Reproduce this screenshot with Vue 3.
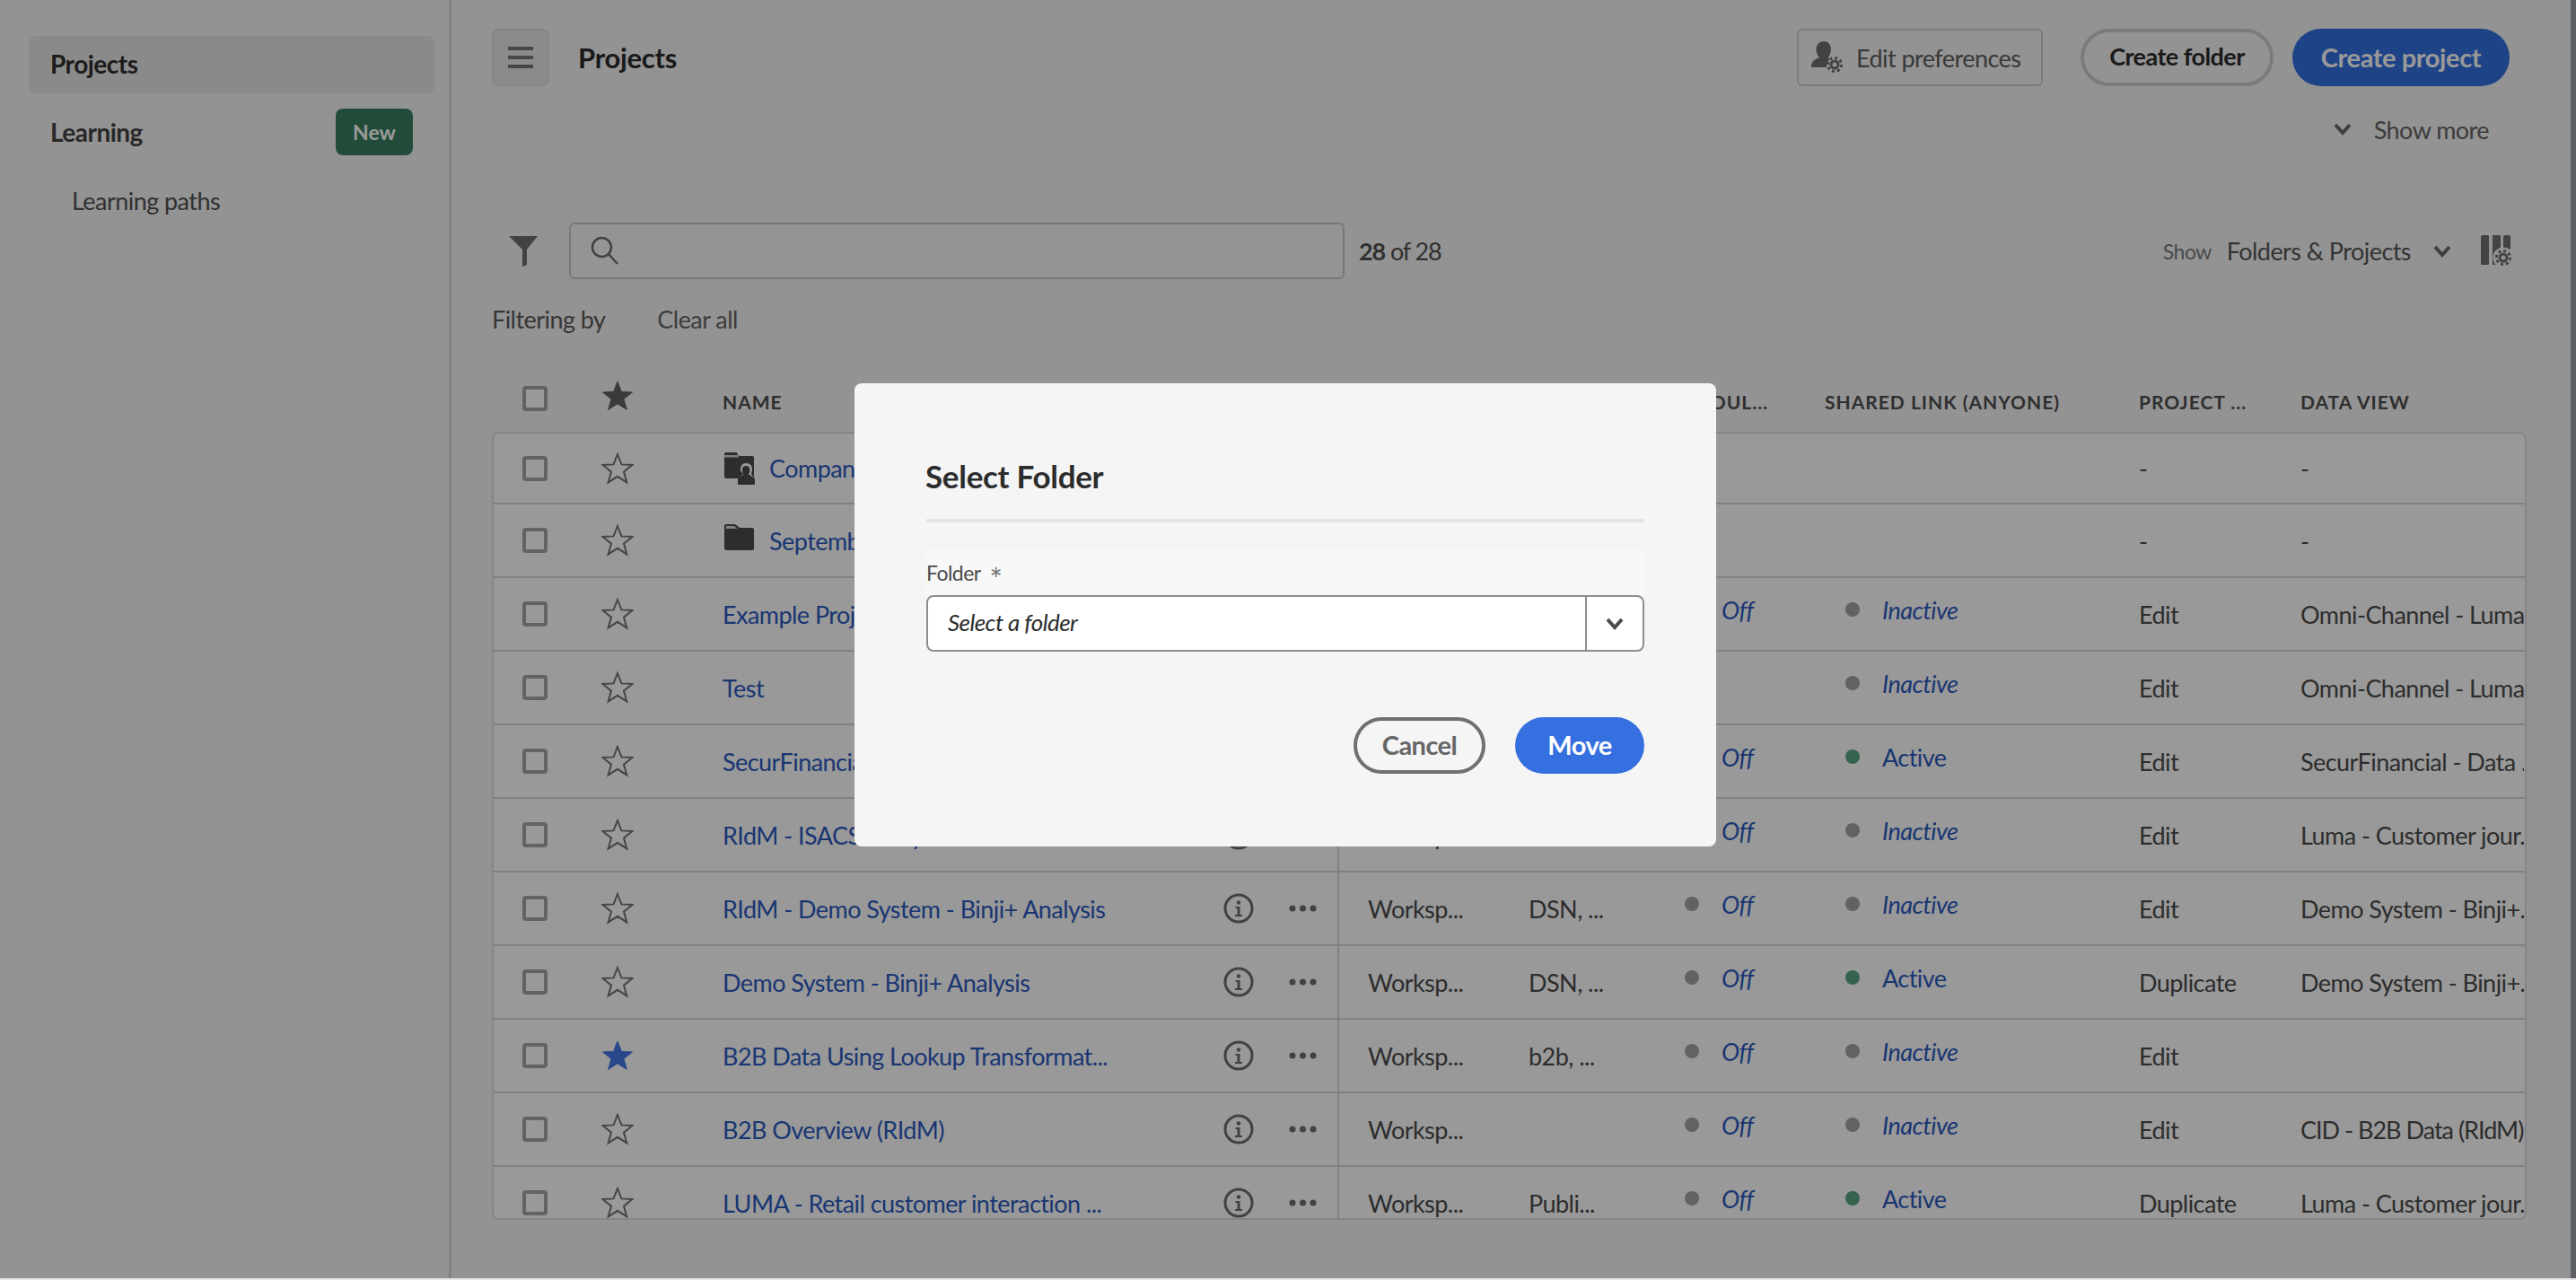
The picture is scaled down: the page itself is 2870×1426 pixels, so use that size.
<script setup>
const rows = [
  { name: 'Company Folder', folder: 'user', project: '-', view: '-' },
  { name: 'September Projects', folder: 'plain', project: '-', view: '-' },
  { name: 'Example Project', type: 'Worksp...', tags: '', off: true, link: 'Inactive', project: 'Edit', view: 'Omni-Channel - Luma...' },
  { name: 'Test', type: 'Worksp...', tags: '', off: false, link: 'Inactive', project: 'Edit', view: 'Omni-Channel - Luma...' },
  { name: 'SecurFinancial - Data Analysis', type: 'Worksp...', tags: '', off: true, link: 'Active', project: 'Edit', view: 'SecurFinancial - Data ...' },
  { name: 'RIdM - ISACS Analysis', type: 'Worksp...', tags: '', off: true, link: 'Inactive', project: 'Edit', view: 'Luma - Customer jour...' },
  { name: 'RIdM - Demo System - Binji+ Analysis', type: 'Worksp...', tags: 'DSN, ...', off: true, link: 'Inactive', project: 'Edit', view: 'Demo System - Binji+...' },
  { name: 'Demo System - Binji+ Analysis', type: 'Worksp...', tags: 'DSN, ...', off: true, link: 'Active', project: 'Duplicate', view: 'Demo System - Binji+...' },
  { name: 'B2B Data Using Lookup Transformat...', starred: true, type: 'Worksp...', tags: 'b2b, ...', off: true, link: 'Inactive', project: 'Edit', view: '' },
  { name: 'B2B Overview (RIdM)', type: 'Worksp...', tags: '', off: true, link: 'Inactive', project: 'Edit', view: 'CID - B2B Data (RIdM)', tight: true },
  { name: 'LUMA - Retail customer interaction ...', type: 'Worksp...', tags: 'Publi...', off: true, link: 'Active', project: 'Duplicate', view: 'Luma - Customer jour...' },
]
const starPoints = '18,2 22.4,13.4 34.5,14 25,21.6 28.3,33.4 18,26.8 7.7,33.4 11,21.6 1.5,14 13.6,13.4'
</script>

<template>
  <div class="app">
    <aside class="sidebar">
      <div class="nav-item selected">Projects</div>
      <div class="nav-item learning"><span>Learning</span><span class="badge">New</span></div>
      <div class="nav-sub">Learning paths</div>
    </aside>

    <main class="main">
      <div class="topbar">
        <button class="menu-btn" aria-label="Menu"><i></i><i></i><i></i></button>
        <h1 class="page-title">Projects</h1>
        <div class="spacer"></div>
        <button class="pref-btn">
          <svg class="pref-icon" viewBox="0 0 36 36">
            <path d="M14 0c5 0 8 4 8 9 0 4-2 7-3 9l1 2.500a11 11 0 0 0-3 8.500H0c0-6 2-8 9-11-2-2-3.500-5-3.500-9C5.500 4 9 0 14 0z" fill="currentColor" />
            <circle cx="26" cy="26" r="4" fill="none" stroke="currentColor" stroke-width="3" />
            <circle cx="26" cy="26" r="7.600" fill="none" stroke="currentColor" stroke-width="3" stroke-dasharray="3 2.970" />
          </svg>
          Edit preferences
        </button>
        <button class="outline-btn">Create folder</button>
        <button class="primary-btn">Create project</button>
      </div>

      <div class="show-more">
        <svg class="chev" viewBox="0 0 20 14"><polyline points="2,2 10,11 18,2" /></svg>
        <span>Show more</span>
      </div>

      <div class="filter-row">
        <svg class="funnel" viewBox="0 0 32 34"><path d="M0 0h32L20 15v17l-5 2V15z" /></svg>
        <div class="search">
          <svg class="search-icon" viewBox="0 0 32 32">
            <circle cx="12.500" cy="12.500" r="10.500" />
            <line x1="20" y1="20" x2="30" y2="31" />
          </svg>
        </div>
        <div class="count"><b>28</b> of 28</div>
        <div class="spacer"></div>
        <span class="show-label">Show</span>
        <span class="show-value">Folders &amp; Projects</span>
        <svg class="chev show-chev" viewBox="0 0 20 14"><polyline points="2,2 10,11 18,2" /></svg>
        <svg class="cols-icon" viewBox="0 0 36 36">
          <rect x="0" y="0" width="9" height="33" rx="1.500" />
          <rect x="13" y="0" width="9" height="33" />
          <rect x="25" y="0" width="8" height="16" rx="1.500" />
          <circle cx="25" cy="25" r="11.500" class="cols-hole" />
          <circle cx="25" cy="25" r="4" fill="none" class="cols-gear" stroke-width="3" />
          <circle cx="25" cy="25" r="7.600" fill="none" class="cols-gear" stroke-width="3" stroke-dasharray="3 2.970" />
        </svg>
      </div>

      <div class="filtering">
        <span>Filtering by</span>
        <span class="clear-all">Clear all</span>
      </div>

      <div class="thead">
        <div class="c-check"><span class="checkbox"></span></div>
        <div class="c-star">
          <svg class="star" viewBox="0 0 36 36"><polygon :points="starPoints" class="star-head" /></svg>
        </div>
        <div>NAME</div>
        <div></div>
        <div></div>
        <div></div>
        <div>SCHEDUL...</div>
        <div>SHARED LINK (ANYONE)</div>
        <div>PROJECT ...</div>
        <div>DATA VIEW</div>
      </div>

      <div class="table">
        <div v-for="row in rows" :key="row.name" class="tr">
          <div class="c-check"><span class="checkbox"></span></div>
          <div class="c-star">
            <svg class="star" viewBox="0 0 36 36">
              <polygon :points="starPoints" :class="row.starred ? 'star-on' : 'star-off'" />
            </svg>
          </div>
          <div class="c-name">
            <svg v-if="row.folder" class="folder" viewBox="0 0 34 36">
              <path d="M2 0h9c1 0 2 .500 3 1.500L17 4h14c1.500 0 2 .800 2 2v21c0 1-.800 2-2 2H2c-1 0-2-1-2-2V2C0 .800 1 0 2 0z" />
              <path v-if="row.folder === 'plain'" class="folder-tab" d="M2 2h9l3.500 3H2z" />
              <template v-if="row.folder === 'user'">
                <path d="M2 0h12v3H0V2C0 1 1 0 2 0z" />
                <path class="folder-tab" d="M0 3h16v2.500H0z" />
                <path class="folder-cut" d="M24 12c5 0 7 3 7 7 0 3-1 4-1 5l4 6v6H14v-6l7-6c0-1-3-2-3-5 0-4 2-7 6-7z" />
                <path d="M24 15c3 0 4.500 2 4.500 4.500 0 2.500-1 4-1.500 5 3 2 7 3 7 6V36H15v-5.500c0-3 4-4 6.500-6-.500-1-1.500-2.500-1.500-5C20 17 21 15 24 15z" />
              </template>
            </svg>
            <span class="link">{{ row.name }}</span>
          </div>
          <div class="c-actions">
            <template v-if="!row.folder">
              <svg class="info" viewBox="0 0 34 34">
                <circle cx="17" cy="17" r="15" />
                <circle cx="17" cy="10.500" r="2.200" class="solid" />
                <path d="M13.500 15h5v9h2.500v2h-8v-2h2.500v-7h-2z" class="solid" />
              </svg>
              <svg class="dots" viewBox="0 0 31 8">
                <circle cx="4" cy="4" r="3.500" /><circle cx="15.500" cy="4" r="3.500" /><circle cx="27" cy="4" r="3.500" />
              </svg>
            </template>
          </div>
          <div class="c-type">{{ row.type }}</div>
          <div class="c-tags">{{ row.tags }}</div>
          <div class="c-status">
            <template v-if="row.off">
              <span class="dot"></span><span class="status-text italic">Off</span>
            </template>
          </div>
          <div class="c-status">
            <template v-if="row.link">
              <span class="dot" :class="{ green: row.link === 'Active' }"></span>
              <span class="status-text" :class="{ italic: row.link === 'Inactive' }">{{ row.link }}</span>
            </template>
          </div>
          <div>{{ row.project }}</div>
          <div class="c-view" :class="{ tight: row.tight }">{{ row.view }}</div>
        </div>
      </div>
    </main>

    <div class="edge"></div>

    <div class="overlay"></div>

    <section class="dialog">
      <h2 class="dialog-title">Select Folder</h2>
      <div class="rule"></div>
      <div class="field-label"><span>Folder</span><span class="req">*</span></div>
      <div class="select">
        <span class="select-value">Select a folder</span>
        <span class="select-btn">
          <svg class="chev" viewBox="0 0 20 14"><polyline points="2,2 10,11 18,2" /></svg>
        </span>
      </div>
      <div class="dialog-actions">
        <button class="cancel-btn">Cancel</button>
        <button class="move-btn">Move</button>
      </div>
    </section>
  </div>
</template>

<style>
html, body { margin: 0; overflow: hidden; }
</style>

<style scoped>
.app {
  position: relative;
  display: flex;
  width: 2870px;
  height: 1426px;
  overflow: hidden;
  background: #f5f5f5;
  color: #4b4b4b;
  font-family: "Lato", "Open Sans", sans-serif;
  font-size: 27px;
  letter-spacing: -0.55px;
  border-bottom: 2px solid #e6e6e6;
  box-sizing: border-box;
}
button { font-family: inherit; letter-spacing: inherit; cursor: pointer; }
.spacer { flex: 1; }

.sidebar {
  flex: none;
  width: 500px;
  box-sizing: content-box;
  border-right: 3px solid #d8d8d8;
  padding-top: 40px;
}
.nav-item {
  margin-left: 32px;
  width: 452px;
  height: 64px;
  box-sizing: border-box;
  padding: 0 24px;
  display: flex;
  align-items: center;
  font-weight: 700;
  font-size: 28px;
  letter-spacing: -0.5px;
  border-radius: 8px;
  color: #444;
}
.nav-item.selected { background: #e7e7e7; color: #2f2f2f; margin-bottom: 12px; padding-bottom: 2px; }
.learning { justify-content: space-between; padding-bottom: 2px; }
.badge {
  width: 86px;
  height: 52px;
  border-radius: 8px;
  background: #377f62;
  color: #fff;
  font-size: 23px;
  letter-spacing: 0;
  display: flex;
  align-items: center;
  justify-content: center;
}
.nav-sub { margin: 12px 0 0 80px; height: 64px; line-height: 64px; color: #505050; }

.main { flex: 1; min-width: 0; padding: 32px 49px 0 45px; box-sizing: border-box; }

.topbar { display: flex; align-items: center; height: 64px; padding-right: 19px; }
.menu-btn {
  width: 64px; height: 64px; box-sizing: border-box; padding: 0;
  background: #e8e8e8; border: 2px solid #dedede; border-radius: 8px;
  display: flex; flex-direction: column; align-items: center; justify-content: center; gap: 6px;
}
.menu-btn i { display: block; width: 28px; height: 4px; background: #777; }
.page-title { margin: 0 0 0 32px; font-size: 31px; font-weight: 700; color: #2b2b2b; letter-spacing: -0.3px; }
.pref-btn {
  width: 274px; height: 64px; box-sizing: border-box;
  background: transparent; border: 2.500px solid #cfcfcf; border-radius: 6px;
  display: flex; align-items: center; gap: 14px; padding: 0 0 0 14px;
  font-size: 27px; color: #606060;
}
.pref-icon { width: 36px; height: 36px; color: #6e6e6e; flex: none; }
.outline-btn {
  margin-left: 42px; width: 215px; height: 64px; box-sizing: border-box;
  background: transparent; border: 4px solid #cdcdcd; border-radius: 32px;
  font-size: 27px; font-weight: 700; color: #2c2c2c; padding: 0 0 4px;
}
.primary-btn {
  margin-left: 21px; width: 242px; height: 64px; border: 0; border-radius: 32px;
  background: #3370df; color: #fff; font-size: 29px; font-weight: 700; letter-spacing: -0.4px; padding: 0 0 2px;
}

.show-more {
  display: flex; align-items: center; justify-content: flex-end; gap: 25px;
  height: 50px; margin-top: 23px; padding-right: 42px; color: #646464;
}
.chev { width: 20px; height: 14px; fill: none; stroke: #6a6a6a; stroke-width: 4; flex: none; }

.filter-row { display: flex; align-items: center; height: 63px; margin-top: 79px; padding-right: 15px; }
.funnel { width: 32px; height: 34px; margin-left: 19px; fill: #6f6f6f; flex: none; }
.search {
  margin-left: 35px; width: 864px; height: 63px; box-sizing: border-box;
  border: 2.500px solid #c8c8c8; border-radius: 6px; background: #f7f7f7;
  display: flex; align-items: center; padding-left: 22px;
}
.search-icon { width: 32px; height: 32px; margin-bottom: 2px; fill: none; stroke: #6e6e6e; stroke-width: 2.500; }
.count { margin-left: 16px; color: #505050; letter-spacing: -1.1px; }
.count b { font-weight: 700; }
.show-label { font-size: 23px; color: #7b7b7b; }
.show-value { margin-left: 17px; color: #565656; }
.show-chev { margin-left: 25px; }
.cols-icon { width: 36px; height: 36px; margin-left: 33px; fill: #707070; flex: none; }
.cols-hole { fill: #f5f5f5; }
.cols-gear { stroke: #707070; }

.filtering { display: flex; align-items: center; gap: 58px; height: 36px; margin-top: 26px; color: #5a5a5a; }
.clear-all { color: #666; }

.thead, .tr { display: grid; }
.thead {
  grid-template-columns: 100px 155px 554px 131px 213px 146px 184px 350px 180px 249px;
  grid-template-rows: 44px;
  height: 56px; margin-top: 52px; padding: 0 0 0 2px; box-sizing: border-box;
  align-items: center;
  font-size: 21px; font-weight: 700; letter-spacing: 1px; color: #4f4f4f; white-space: nowrap;
}
.thead .c-check, .thead .c-star { display: flex; align-items: center; }
.thead .c-check { padding-bottom: 6px; }
.thead .c-star { padding-bottom: 12px; }
.table {
  height: 878px; box-sizing: border-box; overflow: hidden;
  border: 2px solid #dedede; border-radius: 8px; background: #fff;
}
.tr {
  grid-template-columns: 100px 155px 554px 131px 213px 174px 179px 327px 180px 249px;
  height: 82px; box-sizing: border-box;
  border-bottom: 2px solid #d6d6d6;
  align-items: center; white-space: nowrap;
}
.tr:first-child { height: 79px; }
.tr > div { display: flex; align-items: center; height: 100%; min-width: 0; }
.c-check { padding-left: 32px; }
.c-star { padding-left: 20px; }
.checkbox {
  display: block; width: 28px; height: 28px; box-sizing: border-box;
  border: 4.500px solid #a6a6a6; border-radius: 4px; background: #fff;
}
.star { display: block; width: 36px; height: 36px; }
.star-off { fill: none; stroke: #747474; stroke-width: 2; }
.star-on { fill: #4577e8; stroke: #4577e8; stroke-width: 1; }
.star-head { fill: #616161; stroke: #616161; stroke-width: 1; }
.link { color: #2c5abf; }
.folder { width: 34px; height: 36px; margin: 0 16px 0 2px; fill: #4b4b4b; flex: none; }
.folder-tab { fill: #d8d8d8; }
.folder-cut { fill: #fff; }
.c-actions { padding-left: 4px; }
.info { width: 34px; height: 34px; fill: none; stroke: #6f6f6f; stroke-width: 3; flex: none; }
.info .solid { fill: #6f6f6f; stroke: none; }
.dots { width: 31px; height: 8px; margin-left: 39px; fill: #6f6f6f; flex: none; }
.tr > .c-type { border-left: 2px solid #d8d8d8; padding-left: 32px; box-sizing: border-box; }
.c-status { padding-bottom: 10px; box-sizing: border-box; }
.dot { width: 16px; height: 16px; border-radius: 50%; background: #a3a3a3; flex: none; margin-right: 25px; }
.dot.green { background: #5aa583; }
.status-text { color: #2c5abf; }
.italic { font-style: italic; }
.c-view { overflow: hidden; }
.c-view.tight { letter-spacing: -1px; }

.edge { flex: none; width: 6px; background: #9ba0a8; }
.overlay { position: absolute; inset: 0; background: rgba(0, 0, 0, 0.4); }

.dialog {
  position: absolute; left: 952px; top: 427px; width: 960px; height: 516px;
  box-sizing: border-box; padding: 80px 80px 0;
  background: #f5f5f5; border-radius: 8px;
}
.dialog-title { margin: 0 0 0 -1px; height: 50px; line-height: 46px; font-size: 35px; font-weight: 700; color: #2c2c2c; letter-spacing: -0.3px; }
.rule { height: 4px; margin-top: 21px; background: #e4e4e4; }
.field-label {
  display: flex; align-items: center; gap: 10px;
  height: 50px; margin-top: 31px; background: #f8f8f8; font-size: 23px; color: #4b4b4b;
}
.req { color: #777; font-size: 34px; line-height: 34px; padding-top: 14px; }
.select {
  display: flex; height: 63px; box-sizing: border-box;
  border: 2px solid #8e8e8e; border-radius: 8px; background: #fff;
}
.select-value { flex: 1; padding-left: 22px; line-height: 56px; font-style: italic; color: #2c2c2c; font-size: 26px; }
.select-btn {
  width: 62px; border-left: 2px solid #8e8e8e; display: flex; align-items: center; justify-content: center;
}
.select-btn .chev { stroke: #4b4b4b; }
.dialog-actions { display: flex; justify-content: flex-end; gap: 33px; margin-top: 73px; }
.cancel-btn {
  width: 147px; height: 63px; box-sizing: border-box; padding: 0 0 2px;
  background: transparent; border: 4px solid #707070; border-radius: 32px;
  font-size: 29px; font-weight: 700; color: #666;
}
.move-btn {
  width: 144px; height: 63px; border: 0; border-radius: 32px; padding: 0 0 2px;
  background: #3670e0; color: #fff; font-size: 29px; font-weight: 700;
}
</style>
